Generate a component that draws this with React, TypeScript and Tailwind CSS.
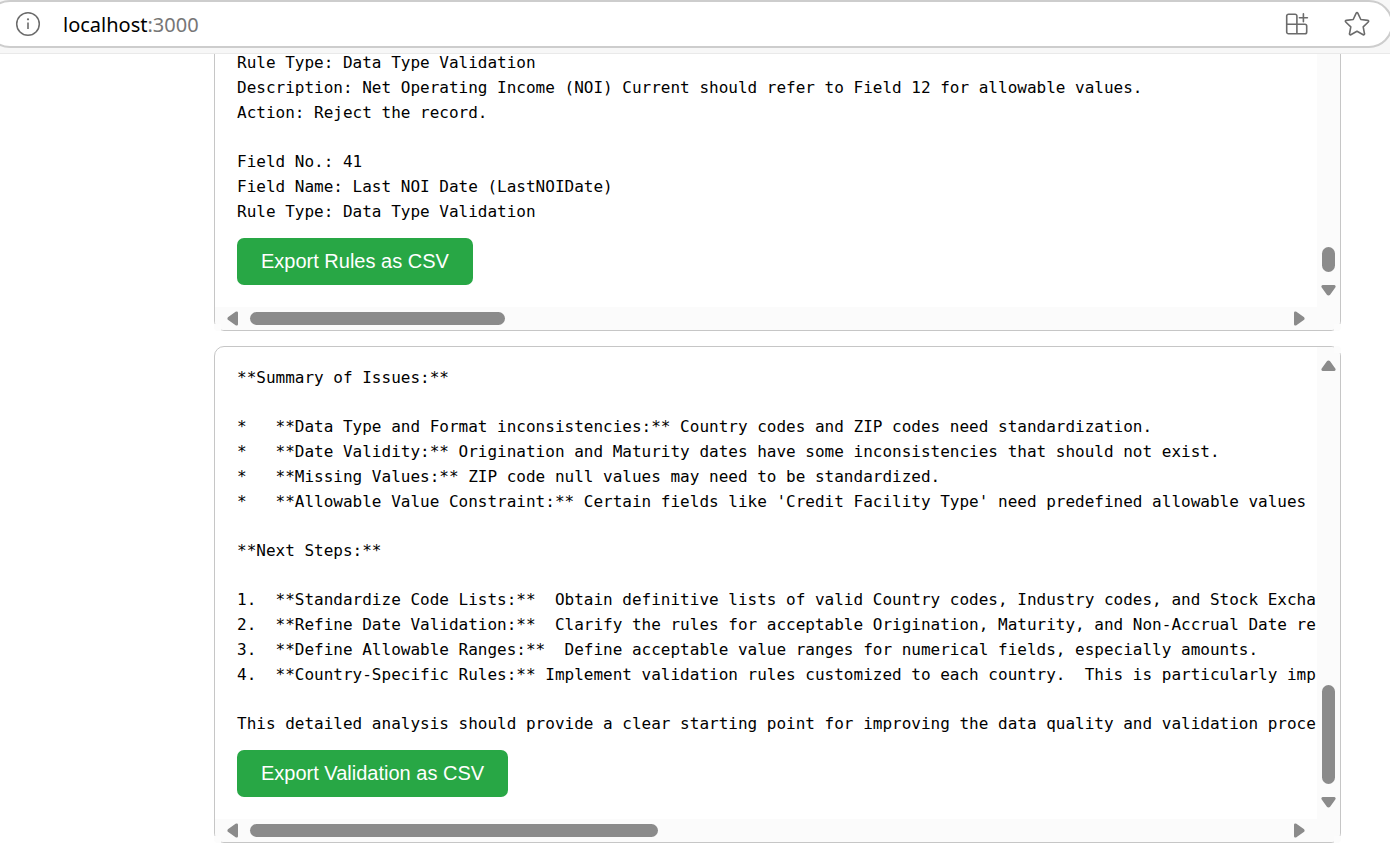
import React from 'react';

type Direction = 'up' | 'down' | 'left' | 'right';

const arrowPaths: Record<Direction, string> = {
  up: 'M5.9 1.2a2 2 0 0 1 3.2 0l5.2 7.4a1.5 1.5 0 0 1-1.3 2.4H2A1.5 1.5 0 0 1 .7 8.6z',
  down: 'M5.9 9.8a2 2 0 0 0 3.2 0l5.2-7.4A1.5 1.5 0 0 0 13 0H2A1.5 1.5 0 0 0 .7 2.4z',
  left: 'M1.2 5.9a2 2 0 0 0 0 3.2l7.4 5.2A1.5 1.5 0 0 0 11 13V2A1.5 1.5 0 0 0 8.6.7z',
  right: 'M9.8 5.9a2 2 0 0 1 0 3.2l-7.4 5.2A1.5 1.5 0 0 1 0 13V2A1.5 1.5 0 0 1 2.4.7z',
};

function ScrollArrow({ direction }: { direction: Direction }) {
  const vertical = direction === 'up' || direction === 'down';
  const width = vertical ? 15 : 11;
  const height = vertical ? 11 : 15;
  return (
    <button type="button" aria-label={`Scroll ${direction}`} className="block shrink-0">
      <svg width={width} height={height} viewBox={`0 0 ${width} ${height}`} className="block fill-[#8b8b8b]">
        <path d={arrowPaths[direction]} />
      </svg>
    </button>
  );
}

interface PanelProps {
  sections: string[];
  exportLabel: string;
  continued?: boolean;
  thumbHeight: string;
  thumbWidth: string;
}

function Panel({ sections, exportLabel, continued = false, thumbHeight, thumbWidth }: PanelProps) {
  return (
    <section className="relative">
      <div
        className={`grid grid-cols-[minmax(0,1fr)_23px] overflow-hidden border-[#c6c6c6] bg-white ${
          continued ? 'rounded-b-[10px] border-x border-b' : 'rounded-[10px] border'
        }`}
      >
        <div className={`overflow-hidden pb-[22px] pl-[22px] ${continued ? '' : 'pt-[18px]'}`}>
          <div className={`flex flex-col gap-6 ${continued ? '-mt-1' : ''}`}>
            {sections.map((section) => (
              <pre
                key={section}
                className="font-['DejaVu_Sans_Mono',monospace] text-[16px] leading-[25px] text-black"
              >
                {section}
              </pre>
            ))}
          </div>
          <button
            type="button"
            className="mt-[14px] h-[47px] rounded-[7px] bg-[#28a745] px-6 pb-[2px] font-['Liberation_Sans',sans-serif] text-[20px] leading-6 text-white"
          >
            {exportLabel}
          </button>
        </div>
        <div className="flex flex-col items-center bg-[#fbfbfb] pt-[13px] pb-[11px]">
          {!continued && <ScrollArrow direction="up" />}
          <div className={`mt-auto mb-[13px] w-[13px] rounded-full bg-[#8b8b8b] ${thumbHeight}`} />
          <ScrollArrow direction="down" />
        </div>
        <div className="flex h-[23px] items-center bg-[#fbfbfb] px-[12px]">
          <ScrollArrow direction="left" />
          <div className={`mr-auto ml-[12px] h-[13px] rounded-full bg-[#8b8b8b] ${thumbWidth}`} />
          <ScrollArrow direction="right" />
        </div>
        <div className="bg-[#fbfbfb]" />
      </div>
      <span className="absolute bottom-0 left-0 size-[7px] rounded-bl-[4px] bg-[#fcfcfc]" />
      <span className="absolute right-0 bottom-0 size-[7px] rounded-br-[4px] bg-[#fcfcfc]" />
      {!continued && <span className="absolute top-0 right-0 size-[7px] rounded-tr-[4px] bg-[#fcfcfc]" />}
    </section>
  );
}

const ruleSections = [
  `Rule Type: Data Type Validation
Description: Net Operating Income (NOI) Current should refer to Field 12 for allowable values.
Action: Reject the record.`,
  `Field No.: 41
Field Name: Last NOI Date (LastNOIDate)
Rule Type: Data Type Validation`,
];

const validationSections = [
  `**Summary of Issues:**`,
  `*   **Data Type and Format inconsistencies:** Country codes and ZIP codes need standardization.
*   **Date Validity:** Origination and Maturity dates have some inconsistencies that should not exist.
*   **Missing Values:** ZIP code null values may need to be standardized.
*   **Allowable Value Constraint:** Certain fields like 'Credit Facility Type' need predefined allowable values`,
  `**Next Steps:**`,
  `1.  **Standardize Code Lists:**  Obtain definitive lists of valid Country codes, Industry codes, and Stock Excha
2.  **Refine Date Validation:**  Clarify the rules for acceptable Origination, Maturity, and Non-Accrual Date re
3.  **Define Allowable Ranges:**  Define acceptable value ranges for numerical fields, especially amounts.
4.  **Country-Specific Rules:** Implement validation rules customized to each country.  This is particularly imp`,
  `This detailed analysis should provide a clear starting point for improving the data quality and validation proce`,
];

function AddressBar() {
  return (
    <header className="overflow-hidden border-b border-[#e9e9e9] bg-[#f7f7f7] pb-[5px]">
      <div className="-mr-[3px] -ml-[14px] flex h-12 items-center rounded-full border-2 border-[#cdcdcd] bg-white pr-[21px] pl-[27px]">
        <button type="button" aria-label="Site information">
          <svg width="26" height="26" viewBox="0 0 26 26" fill="none" className="block stroke-[#6b6b6b]">
            <circle cx="13" cy="13" r="11.3" strokeWidth="1.5" />
            <path d="M13 11.5v6.5" strokeWidth="1.6" />
            <circle cx="13" cy="8.3" r="1.1" className="fill-[#6b6b6b]" stroke="none" />
          </svg>
        </button>
        <a
          href="http://localhost:3000"
          className="ml-[22px] pt-[2px] font-['Noto_Sans',sans-serif] text-[20px] leading-7 text-black"
        >
          localhost<span className="text-[#767676]">:3000</span>
        </a>
        <div className="ml-auto flex items-center gap-[34px]">
          <button type="button" aria-label="App available">
            <svg
              width="26"
              height="26"
              viewBox="0 0 26 26"
              fill="none"
              strokeWidth="1.6"
              strokeLinejoin="round"
              strokeLinecap="round"
              className="block stroke-[#6b6b6b]"
            >
              <path d="M12.9 13.2V5a1.8 1.8 0 0 0-1.8-1.8H4.5A1.8 1.8 0 0 0 2.7 5v16a1.8 1.8 0 0 0 1.8 1.8h16.4a1.8 1.8 0 0 0 1.8-1.8v-6a1.8 1.8 0 0 0-1.8-1.8H2.7M12.9 13.2v9.6" />
              <path d="M19.4 2.7v8M15.4 6.7h8" />
            </svg>
          </button>
          <button type="button" aria-label="Add this page to favorites">
            <svg
              width="26"
              height="26"
              viewBox="0 0 26 26"
              fill="none"
              strokeWidth="1.6"
              strokeLinejoin="round"
              className="block stroke-[#6b6b6b]"
            >
              <path d="M12.2 2.1a.9.9 0 0 1 1.6 0l3 6.4 7 .9a.9.9 0 0 1 .5 1.6l-5.1 4.8 1.3 7a.9.9 0 0 1-1.3 1L13 20.3l-6.2 3.5a.9.9 0 0 1-1.3-1l1.3-7L1.7 11a.9.9 0 0 1 .5-1.6l7-.9z" />
            </svg>
          </button>
        </div>
      </div>
    </header>
  );
}

export default function App() {
  return (
    <div className="min-h-screen overflow-hidden bg-white">
      <AddressBar />
      <main className="mr-[49px] ml-[214px] flex flex-col gap-[15px]">
        <Panel
          continued
          sections={ruleSections}
          exportLabel="Export Rules as CSV"
          thumbHeight="h-[25px]"
          thumbWidth="w-[255px]"
        />
        <Panel
          sections={validationSections}
          exportLabel="Export Validation as CSV"
          thumbHeight="h-[99px]"
          thumbWidth="w-[408px]"
        />
      </main>
    </div>
  );
}
